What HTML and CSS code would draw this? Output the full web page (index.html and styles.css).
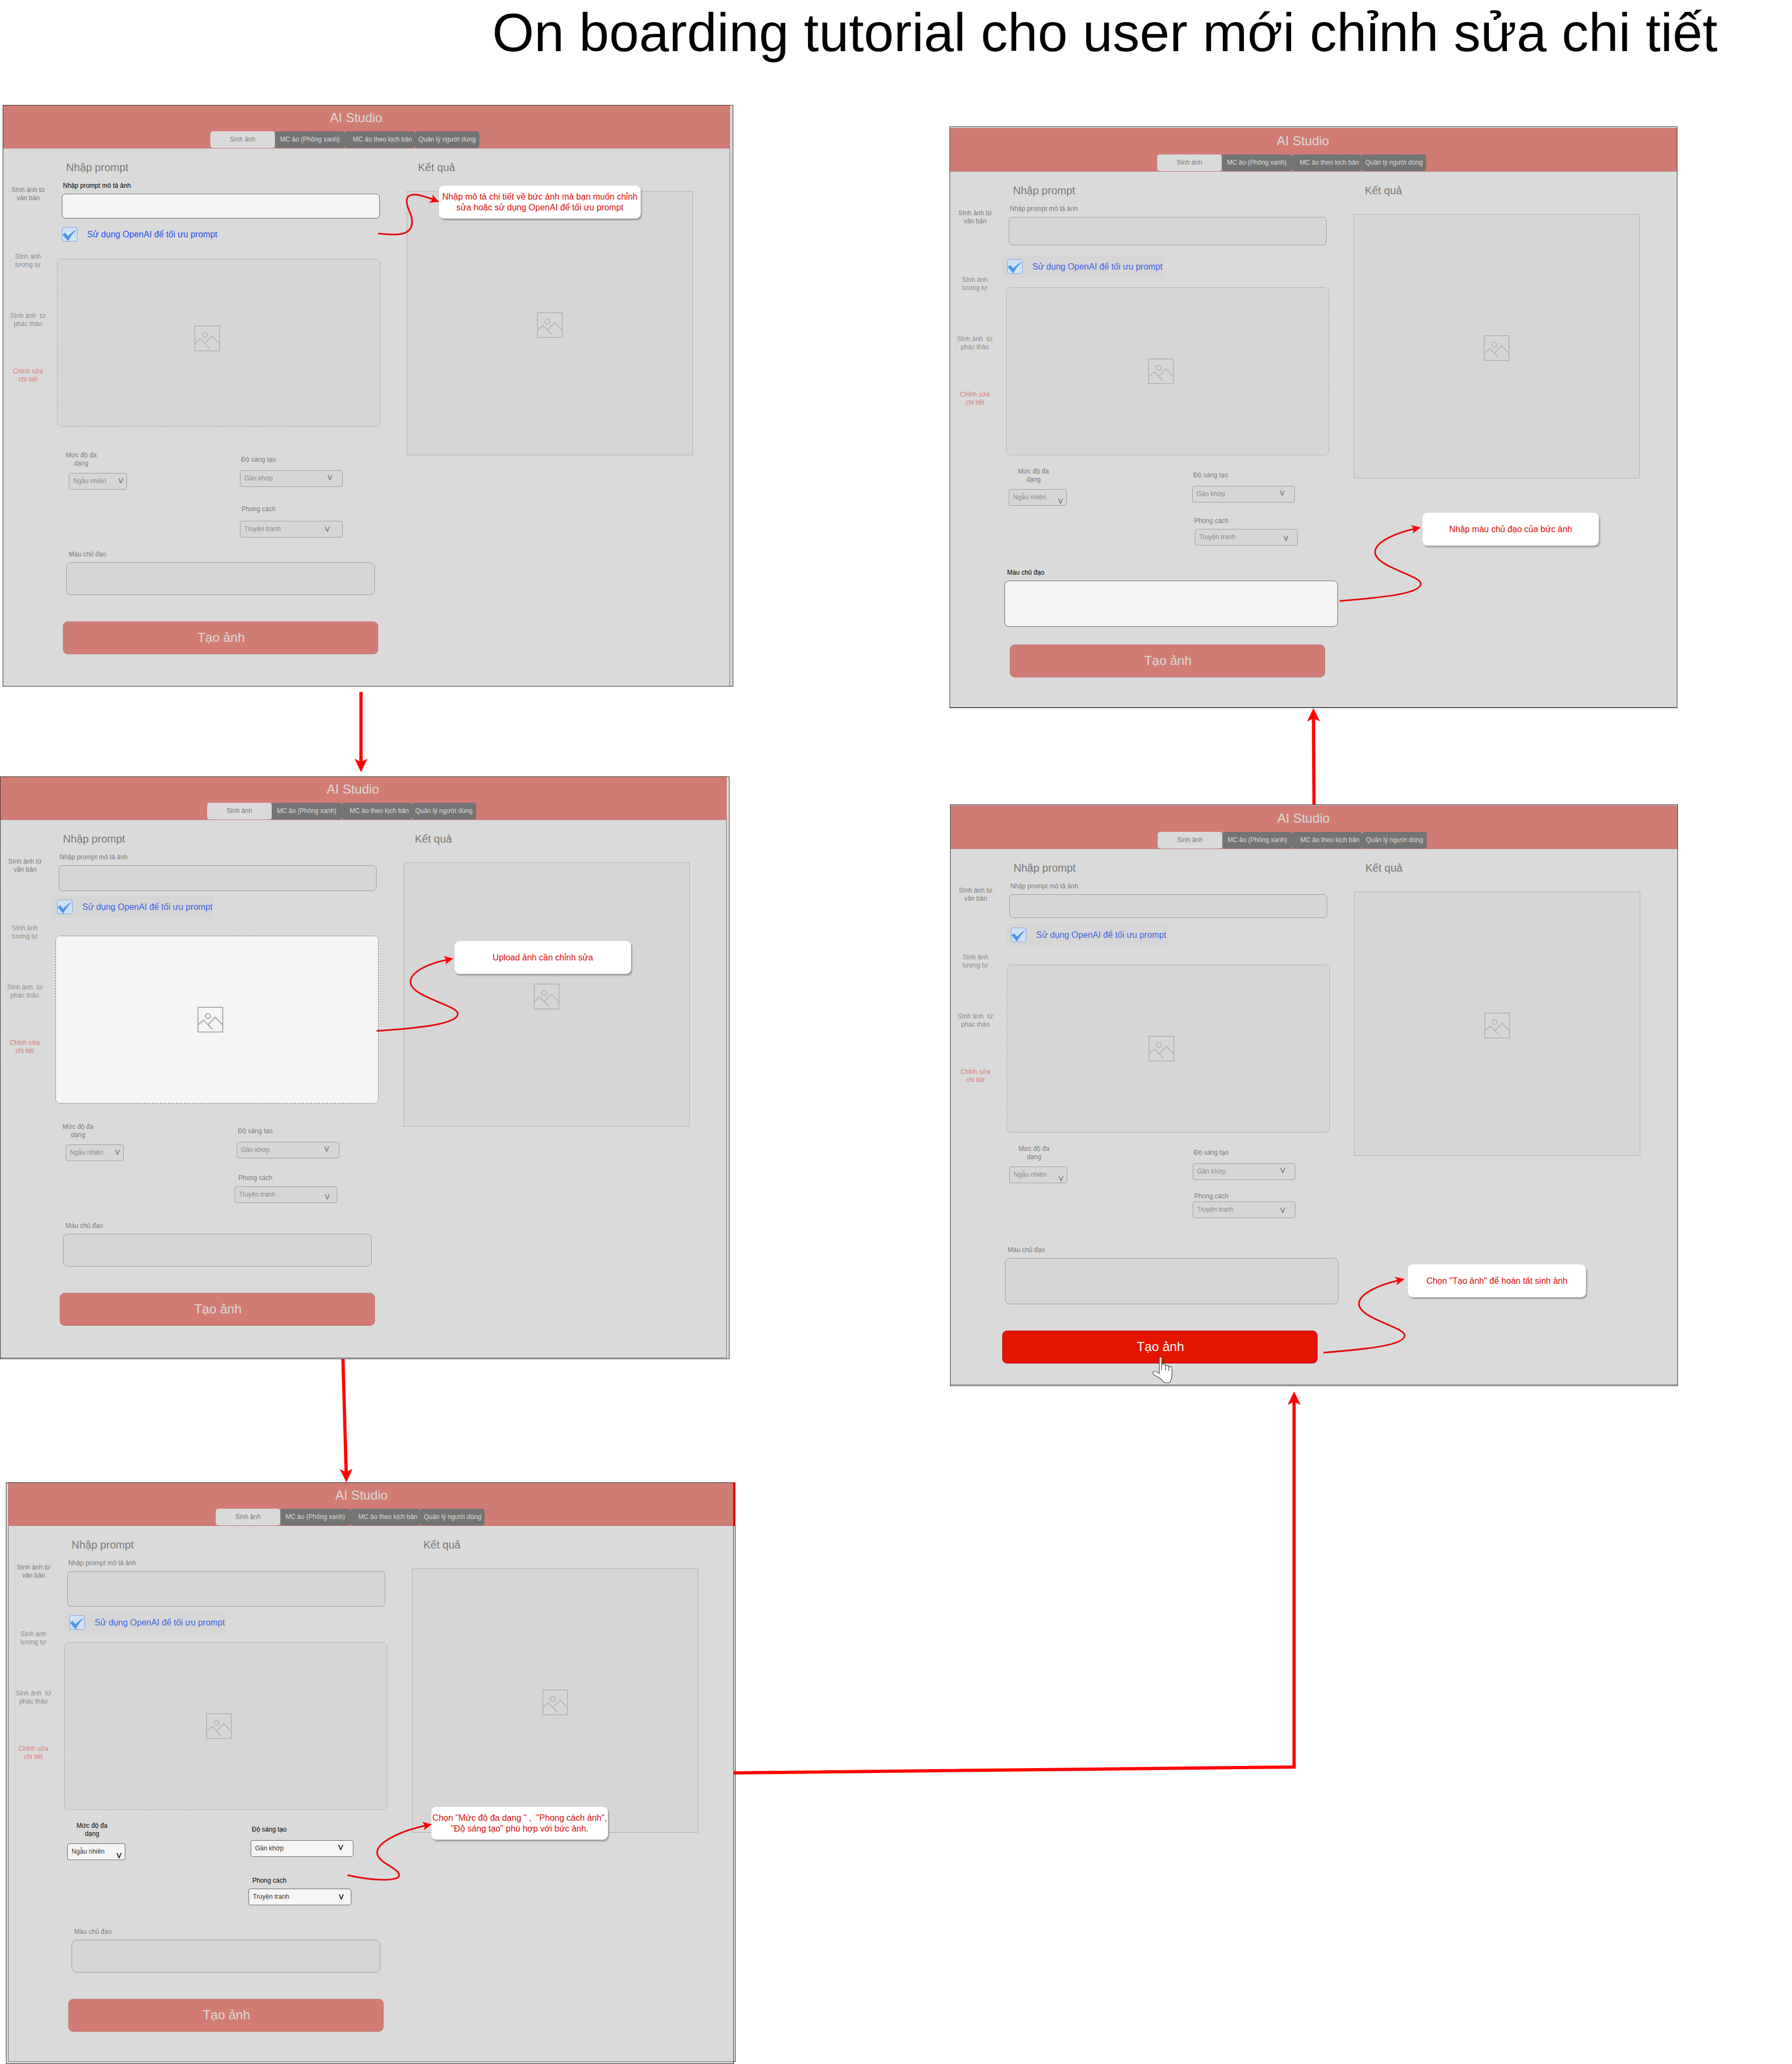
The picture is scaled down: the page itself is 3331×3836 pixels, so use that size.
FILE: index.html
```
<!DOCTYPE html>
<html lang="vi">
<head>
<meta charset="utf-8">
<title>On boarding tutorial</title>
<link rel="stylesheet" href="styles.css">
</head>
<body>
<svg class="defs" aria-hidden="true">
  <symbol id="picture" viewBox="0 0 48 48">
    <path d="M1 1H47V47H1Z M1 34L11 25L28 42 M19 34L33 19.5L47 34" fill="none" stroke="#aaa" stroke-width="2"/>
    <circle cx="19.5" cy="17.5" r="4.6" fill="none" stroke="#aaa" stroke-width="2"/>
  </symbol>
  <symbol id="check" viewBox="0 0 29 27">
    <rect x=".5" y=".5" width="28" height="26" rx="3.5" class="check-box"/>
    <path d="M1 14L6 10.5L11.5 17Q19 8 28 4.5Q18 13 11.5 26Z" class="check-mark"/>
  </symbol>
</svg>
<main class="canvas">
  <h1 class="title">On boarding tutorial cho user mới chỉnh sửa chi tiết</h1>

  <section class="screen s1">
    <header class="bar">
      <div class="brand">AI Studio</div>
      <nav class="tabs"><span class="tab on">Sinh ảnh</span><span class="tab wide">MC ảo (Phông xanh)</span><span class="tab wide">&nbsp; &nbsp;MC ảo theo kịch bản</span><span class="tab">Quản lý người dùng</span></nav>
    </header>
    <div class="body">
      <aside class="side"><span class="item first">SInh ảnh từ văn bản</span><span class="item">SInh ảnh tương tự</span><span class="item">SInh ảnh&nbsp; từ phác thảo</span><span class="item active">Chỉnh sửa chi tiết</span></aside>
      <div class="form">
        <div class="prompt">
          <h2>Nhập prompt</h2>
          <label class="hint lit">Nhập prompt mô tả ảnh</label>
          <div class="field lit"></div>
          <div class="ai clear"><svg><use href="#check"/></svg><span>Sử dụng OpenAI để tối ưu prompt</span></div>
          <div class="upload"><svg><use href="#picture"/></svg></div>
        </div>
        <div class="options">
          <div class="left"><label>Mức độ đa dạng</label><div class="select variety"><span>Ngẫu nhiên</span><i>V</i></div></div>
          <div class="right"><label class="l2">Độ sáng tạo</label><div class="select creative"><span>Gần khớp</span><i>V</i></div><label class="l3">Phong cách</label><div class="select look"><span>Truyện tranh</span><i>V</i></div></div>
        </div>
        <div class="colour"><label>Màu chủ đạo</label><div class="field"></div></div>
        <div class="submit">Tạo ảnh</div>
      </div>
      <div class="result"><h2>Kết quả</h2><div class="preview"><svg><use href="#picture"/></svg></div></div>
    </div>
    <div class="shade"></div>
  </section>

  <section class="screen s2">
    <header class="bar">
      <div class="brand">AI Studio</div>
      <nav class="tabs"><span class="tab on">Sinh ảnh</span><span class="tab wide">MC ảo (Phông xanh)</span><span class="tab wide">&nbsp; &nbsp;MC ảo theo kịch bản</span><span class="tab">Quản lý người dùng</span></nav>
    </header>
    <div class="body">
      <aside class="side"><span class="item first">SInh ảnh từ văn bản</span><span class="item">SInh ảnh tương tự</span><span class="item">SInh ảnh&nbsp; từ phác thảo</span><span class="item active">Chỉnh sửa chi tiết</span></aside>
      <div class="form">
        <div class="prompt">
          <h2>Nhập prompt</h2>
          <label class="hint">Nhập prompt mô tả ảnh</label>
          <div class="field"></div>
          <div class="ai"><svg><use href="#check"/></svg><span>Sử dụng OpenAI để tối ưu prompt</span></div>
          <div class="upload lit"><svg><use href="#picture"/></svg></div>
        </div>
        <div class="options">
          <div class="left"><label>Mức độ đa dạng</label><div class="select variety"><span>Ngẫu nhiên</span><i>V</i></div></div>
          <div class="right"><label class="l2">Độ sáng tạo</label><div class="select creative"><span>Gần khớp</span><i>V</i></div><label class="l3">Phong cách</label><div class="select look"><span>Truyện tranh</span><i>V</i></div></div>
        </div>
        <div class="colour"><label>Màu chủ đạo</label><div class="field"></div></div>
        <div class="submit">Tạo ảnh</div>
      </div>
      <div class="result"><h2>Kết quả</h2><div class="preview"><svg><use href="#picture"/></svg></div></div>
    </div>
    <div class="shade"></div>
  </section>

  <section class="screen s3">
    <header class="bar">
      <div class="brand">AI Studio</div>
      <nav class="tabs"><span class="tab on">Sinh ảnh</span><span class="tab wide">MC ảo (Phông xanh)</span><span class="tab wide">&nbsp; &nbsp;MC ảo theo kịch bản</span><span class="tab">Quản lý người dùng</span></nav>
    </header>
    <div class="body">
      <aside class="side"><span class="item first">SInh ảnh từ văn bản</span><span class="item">SInh ảnh tương tự</span><span class="item">SInh ảnh&nbsp; từ phác thảo</span><span class="item active">Chỉnh sửa chi tiết</span></aside>
      <div class="form">
        <div class="prompt">
          <h2>Nhập prompt</h2>
          <label class="hint">Nhập prompt mô tả ảnh</label>
          <div class="field"></div>
          <div class="ai"><svg><use href="#check"/></svg><span>Sử dụng OpenAI để tối ưu prompt</span></div>
          <div class="upload"><svg><use href="#picture"/></svg></div>
        </div>
        <div class="options lit">
          <div class="left"><label>Mức độ đa dạng</label><div class="select variety"><span>Ngẫu nhiên</span><i>V</i></div></div>
          <div class="right"><label class="l2">Độ sáng tạo</label><div class="select creative"><span>Gần khớp</span><i>V</i></div><label class="l3">Phong cách</label><div class="select look"><span>Truyện tranh</span><i>V</i></div></div>
        </div>
        <div class="colour"><label>Màu chủ đạo</label><div class="field"></div></div>
        <div class="submit">Tạo ảnh</div>
      </div>
      <div class="result"><h2>Kết quả</h2><div class="preview"><svg><use href="#picture"/></svg></div></div>
    </div>
    <div class="shade"></div>
  </section>

  <section class="screen s4">
    <header class="bar">
      <div class="brand">AI Studio</div>
      <nav class="tabs"><span class="tab on">Sinh ảnh</span><span class="tab wide">MC ảo (Phông xanh)</span><span class="tab wide">&nbsp; &nbsp;MC ảo theo kịch bản</span><span class="tab">Quản lý người dùng</span></nav>
    </header>
    <div class="body">
      <aside class="side"><span class="item first">SInh ảnh từ văn bản</span><span class="item">SInh ảnh tương tự</span><span class="item">SInh ảnh&nbsp; từ phác thảo</span><span class="item active">Chỉnh sửa chi tiết</span></aside>
      <div class="form">
        <div class="prompt">
          <h2>Nhập prompt</h2>
          <label class="hint">Nhập prompt mô tả ảnh</label>
          <div class="field"></div>
          <div class="ai"><svg><use href="#check"/></svg><span>Sử dụng OpenAI để tối ưu prompt</span></div>
          <div class="upload"><svg><use href="#picture"/></svg></div>
        </div>
        <div class="options">
          <div class="left"><label>Mức độ đa dạng</label><div class="select variety"><span>Ngẫu nhiên</span><i>V</i></div></div>
          <div class="right"><label class="l2">Độ sáng tạo</label><div class="select creative"><span>Gần khớp</span><i>V</i></div><label class="l3">Phong cách</label><div class="select look"><span>Truyện tranh</span><i>V</i></div></div>
        </div>
        <div class="colour lit"><label>Màu chủ đạo</label><div class="field"></div></div>
        <div class="submit">Tạo ảnh</div>
      </div>
      <div class="result"><h2>Kết quả</h2><div class="preview"><svg><use href="#picture"/></svg></div></div>
    </div>
    <div class="shade"></div>
  </section>

  <section class="screen s5">
    <header class="bar">
      <div class="brand">AI Studio</div>
      <nav class="tabs"><span class="tab on">Sinh ảnh</span><span class="tab wide">MC ảo (Phông xanh)</span><span class="tab wide">&nbsp; &nbsp;MC ảo theo kịch bản</span><span class="tab">Quản lý người dùng</span></nav>
    </header>
    <div class="body">
      <aside class="side"><span class="item first">SInh ảnh từ văn bản</span><span class="item">SInh ảnh tương tự</span><span class="item">SInh ảnh&nbsp; từ phác thảo</span><span class="item active">Chỉnh sửa chi tiết</span></aside>
      <div class="form">
        <div class="prompt">
          <h2>Nhập prompt</h2>
          <label class="hint">Nhập prompt mô tả ảnh</label>
          <div class="field"></div>
          <div class="ai"><svg><use href="#check"/></svg><span>Sử dụng OpenAI để tối ưu prompt</span></div>
          <div class="upload"><svg><use href="#picture"/></svg></div>
        </div>
        <div class="options">
          <div class="left"><label>Mức độ đa dạng</label><div class="select variety"><span>Ngẫu nhiên</span><i>V</i></div></div>
          <div class="right"><label class="l2">Độ sáng tạo</label><div class="select creative"><span>Gần khớp</span><i>V</i></div><label class="l3">Phong cách</label><div class="select look"><span>Truyện tranh</span><i>V</i></div></div>
        </div>
        <div class="colour"><label>Màu chủ đạo</label><div class="field"></div></div>
        <div class="submit lit">Tạo ảnh</div>
      </div>
      <div class="result"><h2>Kết quả</h2><div class="preview"><svg><use href="#picture"/></svg></div></div>
    </div>
    <div class="shade"></div>
  </section>

  <p class="tip t1">Nhập mô tả chi tiết về bức ảnh mà bạn muốn chỉnh<br>sửa hoặc sử dụng OpenAI để tối ưu prompt</p>
  <p class="tip t2">Upload ảnh cần chỉnh sửa</p>
  <p class="tip t3">Chọn "Mức độ đa dạng " ,&nbsp; "Phong cách ảnh",<br>"Độ sáng tạo" phù hợp với bức ảnh.</p>
  <p class="tip t4">Nhập màu chủ đạo của bức ảnh</p>
  <p class="tip t5">Chọn "Tạo ảnh" để hoàn tất sinh ảnh</p>

  <svg class="links" viewBox="0 0 3331 3836">
    <defs>
      <marker id="big" markerUnits="userSpaceOnUse" markerWidth="30" markerHeight="30" refX="18" refY="15" orient="auto" overflow="visible"><path d="M25 15L0 27L6 15L0 3Z"/></marker>
      <marker id="small" markerUnits="userSpaceOnUse" markerWidth="20" markerHeight="20" refX="9" refY="10" orient="auto" overflow="visible"><path d="M17 10L0 18L4 10L0 2Z"/></marker>
    </defs>
    <g class="flow">
      <path d="M671 1286V1428"/>
      <path d="M637.5 2526L643.8 2748"/>
      <path d="M1363 3295L2405.500 3284V2593"/>
      <path d="M2442.500 1495L2441.500 1323"/>
    </g>
    <g class="hook">
      <path d="M703 434C740 438 766 438 766 412C766 396 756 388 756 374C756 356 778 360 809 372.500"/>
      <path d="M700 1916C790 1910 851 1902 851 1884C851 1868 763 1853 763 1825C763 1806 797 1790 835 1783"/>
      <path d="M646 3485C690 3495 742 3498 742 3485C742 3472 701 3462 701 3443C701 3424 745 3402 795 3392"/>
      <path d="M2490 1117C2575 1110 2641 1103 2641 1085C2641 1069 2556 1054 2556 1026C2556 1007 2595 990 2633 982"/>
      <path d="M2460 2514C2545 2507 2611 2500 2611 2482C2611 2466 2526 2451 2526 2423C2526 2404 2565 2387 2603 2379"/>
    </g>
    <path class="hand" d="M2155 2551V2524.500Q2155 2522 2157.200 2522T2159.500 2524.500V2536Q2165 2533 2166.500 2538Q2171 2536 2172.500 2540.500Q2178.500 2538 2178.500 2546V2556Q2178 2562 2175 2569Q2169 2571 2163 2569Q2160 2564 2154 2560L2144.500 2555Q2142 2551.500 2144 2549Q2148 2547 2155 2553ZM2159.500 2536V2546M2166.500 2538V2547M2172.500 2540.500V2548"/>
  </svg>
</main>
</body>
</html>
```
FILE: styles.css
```
* { box-sizing: border-box; }

body {
  margin: 0;
  background: #fff;
  font-family: "Liberation Sans", Arial, sans-serif;
  font-size: 12px;
  line-height: 14px;
  color: #000;
}

.defs { display: block; width: 0; height: 0; }

.canvas {
  position: relative;
  width: 3331px;
  height: 3836px;
  overflow: hidden;
}

.title {
  margin: 0;
  padding-left: 915px;
  font-size: 100px;
  letter-spacing: .1px;
  line-height: 121px;
  font-weight: 400;
  white-space: nowrap;
}

/* screens are nodes on the diagram canvas */
.screen {
  position: absolute;
  width: 1352px;
  height: 1081px;
  background: #fff;
  border: 1px solid #000;
}

.s1 {
  left: 5px; top: 195px;
  --shade-w: 1358px;
  --field-h: 46px; --ai-gap: 9px; --ai-x: 4px; --up-gap: 25px; --up-x: 4px; --pic-x: -22px; --pic-y: -8px;
  --l3-gap: 34px; --l3-x: 7px; --look-gap: 15px; --look-x: 4px; --look-c: 149px; --look-y: 8px;
}
.s2 {
  left: -1px; top: 1443px;
  --shade-x: 1px; --shade-w: 1356px; --shade-h: 1083px;
  --field-h: 48px; --ai-gap: 9px; --ai-x: 1px; --up-gap: 33px; --up-x: 7px;
  --l3-gap: 29px; --l3-x: 7px; --look-gap: 9px; --look-x: 0px; --look-c: 159px; --look-y: 12px;
}
.s3 {
  left: 15px; top: 2755px; height: 1077px;
  --shade-x: -4px; --shade-w: 1353px;
  --field-h: 66px; --ai-gap: 9px; --ai-x: 8px; --up-gap: 16px; --up-x: 7px;
  --l3-gap: 37px; --l3-x: 17px; --look-gap: 8px; --look-x: 10px; --look-c: 159px; --look-y: 8px;
}
.s4 {
  left: 1765px; top: 238px; height: 1077px; width: 1353px;
  --shade-y: -3px; --shade-w: 1353px;
  --field-h: 53px; --ai-gap: 19px; --ai-x: 1px; --up-gap: 18px; --up-x: 8px;
  --l3-gap: 27px; --l3-x: 18px; --look-gap: 8px; --look-x: 19px; --look-c: 156px; --look-y: 10px;
}
.s5 {
  left: 1766px; top: 1497px; height: 1077px; width: 1353px;
  --shade-y: -2px; --shade-w: 1353px;
  --field-h: 44px; --ai-gap: 11px; --ai-x: 7px; --up-gap: 35px; --up-x: 8px;
  --l3-gap: 23px; --l3-x: 17px; --look-gap: 3px; --look-x: 14px; --look-c: 154px; --look-y: 9px;
}

.s3, .s4, .s5 {
  --var-y: 1px; --var-lx: 29px; --var-x: 13px; --var-cy: 15px;
  --cre-y: 8px; --cre-lx: 16px; --cre-x: 14px;
}
.s4, .s5 {
  --col-y: 4px; --col-lx: 10px; --col-x: 5px; --col-w: 620px; --col-h: 86px;
}

.shade {
  position: absolute;
  z-index: 1;
  left: calc(var(--shade-x, 0px) - 1px);
  top: calc(var(--shade-y, 0px) - 1px);
  width: var(--shade-w);
  height: var(--shade-h, 1081px);
  background: rgba(193, 193, 193, .6);
  border: 1px solid #333;
}

.lit { position: relative; z-index: 2; }

.bar {
  display: flex;
  flex-direction: column;
  height: 81px;
  margin: -1px -1px 0;
  background: #e51400;
  border: 1px solid #b20000;
  color: #fff;
}
.brand {
  width: 1312px;
  height: 49px;
  font-size: 24px;
  line-height: 45px;
  text-align: center;
}
.tabs { display: flex; width: 500px; margin-left: 385px; }
.tab {
  width: 120px;
  height: 31px;
  border-radius: 5px;
  background: #000;
  line-height: 31px;
  text-align: center;
  white-space: nowrap;
}
.tab.wide { width: 130px; }
.tab.on { background: #fff; color: #000; }

.body { display: flex; margin-left: -1px; }

.side {
  display: flex;
  flex-direction: column;
  width: 97px;
  padding: 54px 0 0 12px;
}
.item {
  display: flex;
  align-items: center;
  justify-content: center;
  width: 70px;
  height: 60px;
  border: 1px solid #f0f0f0;
  border-radius: 9px;
  color: #333;
  line-height: 15px;
  text-align: center;
}
.item.first { width: 71px; height: 61px; color: #000; margin-bottom: 64px; }
.item:nth-child(3) { margin: 50px 0 43px; }
.item.active { color: #f00; }

.form { width: 653px; }
h2 {
  margin: 0;
  padding-top: 23px;
  font-size: 20px;
  line-height: 24px;
  font-weight: 400;
}
.prompt { height: 549px; }
.prompt h2 { padding-left: 21px; }
.hint { display: block; margin: 15px 0 8px 15px; }
.field {
  background: #f5f5f5;
  border: 1px solid #666;
  border-radius: 9px;
}
.prompt .field { width: 591px; height: var(--field-h); margin-left: 13px; border-radius: 7px; }

.ai {
  position: relative;
  z-index: 2;
  display: flex;
  align-items: center;
  width: 300px;
  height: 41px;
  margin: var(--ai-gap) 0 0 var(--ai-x);
  padding-left: 9px;
  background: #d6d6d6;
  color: #3b62e8;
  font-size: 16px;
  white-space: nowrap;
}
.ai svg { width: 29px; height: 27px; margin-right: 18px; }
.check-box { fill: #d0e0f5; stroke: #7ea6e0; }
.check-mark { fill: #4d96e8; }
.ai.clear { background: none; color: #1f50ee; }

.upload {
  display: flex;
  align-items: center;
  justify-content: center;
  width: 601px;
  height: 312px;
  margin: var(--up-gap) 0 0 var(--up-x);
  background: #f5f5f5;
  border: 1px dashed #666;
  border-radius: 9px;
}
.upload svg { width: 48px; height: 48px; margin: calc(2 * var(--pic-y, 0px)) 0 0 calc(2 * var(--pic-x, -13px)); }

.options { display: flex; height: 185px; }
.left { width: 340px; padding-top: var(--var-y, 14px); }
.left label {
  display: block;
  width: 60px;
  margin-left: var(--var-lx, 19px);
  line-height: 15px;
  text-align: center;
}
.right { padding-top: var(--cre-y, 22px); }
.right label { display: block; }
.l2 { margin-left: var(--cre-lx, 6px); }
.l3 { margin: var(--l3-gap) 0 0 var(--l3-x); }

.select {
  display: flex;
  width: 191px;
  height: 31px;
  padding-left: 7px;
  background: #f5f5f5;
  border: 1px solid #666;
  border-radius: 4px;
  color: #333;
}
.select span { padding-top: 7px; white-space: nowrap; }
.select i { font-style: normal; color: #000; font-size: 13px; -webkit-text-stroke: .4px #000; }
.variety { width: 108px; margin: 10px 0 0 var(--var-x, 26px); }
.variety span { width: 84px; }
.variety i { padding-top: var(--var-cy, 7px); }
.creative { margin: 13px 0 0 var(--cre-x, 4px); }
.creative span { width: 155px; }
.creative i { padding-top: 6px; }
.look { margin: var(--look-gap) 0 0 var(--look-x); }
.look span { width: calc(var(--look-c) + 1px); }
.look i { padding-top: var(--look-y); }

.colour { height: 145px; padding-top: var(--col-y, 13px); }
.colour label { display: block; margin-left: var(--col-lx, 26px); }
.colour .field {
  width: var(--col-w, 574px);
  height: var(--col-h, 61px);
  margin: 8px 0 0 var(--col-x, 21px);
}
.submit {
  width: 586px;
  height: 61px;
  margin-left: 15px;
  padding-left: 2px;
  background: #e51400;
  border: 1px solid #b20000;
  border-radius: 9px;
  color: #fff;
  font-size: 24px;
  line-height: 58px;
  text-align: center;
}
.s5 .submit { margin: 16px 0 0; }

.result h2 { padding-left: 22px; }
.preview {
  display: flex;
  align-items: center;
  justify-content: center;
  width: 532px;
  height: 491px;
  margin: 32px 0 0 1px;
  padding-top: 7px;
  background: #f5f5f5;
  border: 1px solid #999;
}
.preview svg { width: 48px; height: 48px; }

/* callouts pinned to the canvas */
.tip {
  position: absolute;
  z-index: 3;
  display: flex;
  align-items: center;
  justify-content: center;
  width: 328px;
  height: 61px;
  margin: 0;
  border-radius: 9px;
  background: #fff;
  box-shadow: 2px 3px 3px rgba(0, 0, 0, .3);
  color: #d80a0a;
  font-size: 16px;
  line-height: 20px;
  text-align: center;
  white-space: nowrap;
}
.t1 { left: 816px; top: 345px; width: 375px; }
.t2 { left: 845px; top: 1749px; }
.t3 { left: 802px; top: 3358px; }
.t4 { left: 2644px; top: 953px; }
.t5 { left: 2617px; top: 2350px; width: 331px; }

.links {
  position: absolute;
  z-index: 4;
  left: 0;
  top: 0;
  width: 3331px;
  height: 3836px;
}
.links path { fill: none; }
.flow { stroke: #f00; stroke-width: 6; }
.flow path { marker-end: url(#big); }
.hook { stroke: #e60a0a; stroke-width: 3; }
.hook path { marker-end: url(#small); }
.links .hand { fill: #fff; stroke: #444; stroke-width: 1.2; }
.links marker path { fill: #f00; stroke: none; }
```
